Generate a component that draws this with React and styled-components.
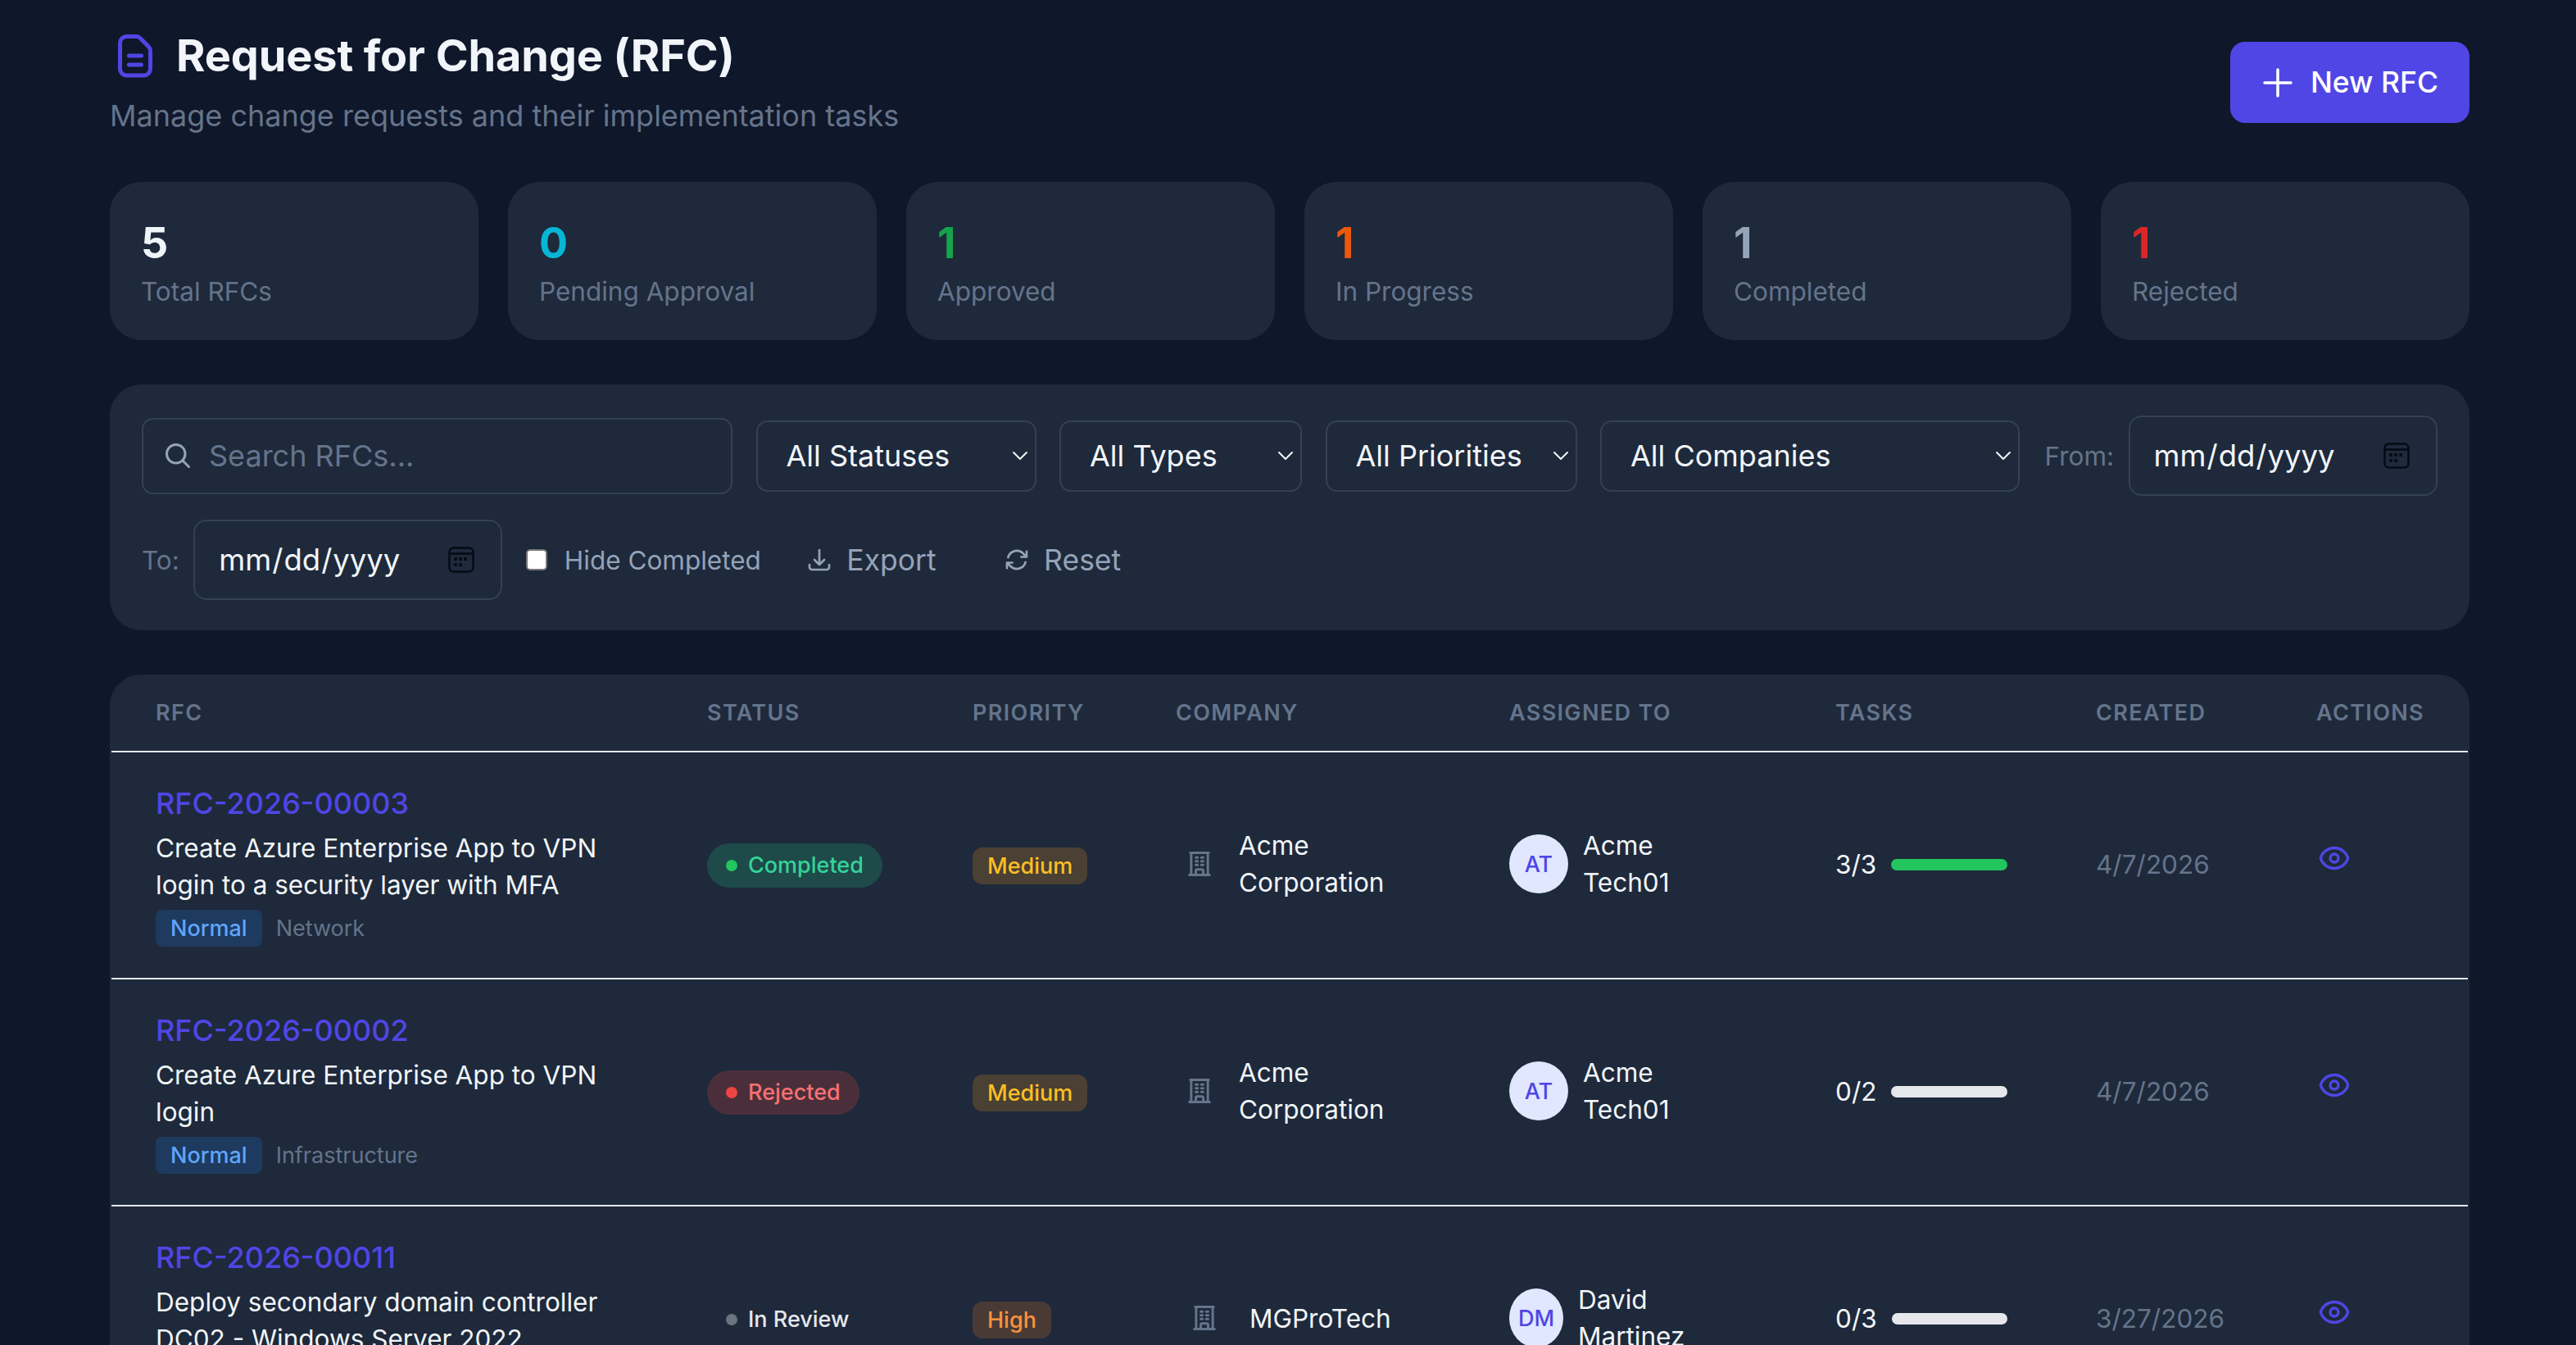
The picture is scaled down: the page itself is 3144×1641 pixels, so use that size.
import React from "react";
import styled, { createGlobalStyle } from "styled-components";
import {
  HiOutlineMagnifyingGlass,
  HiOutlineArrowDownTray,
  HiOutlineArrowPath,
  HiOutlineBuildingOffice,
  HiOutlineEye,
} from "react-icons/hi2";

const chevron = `url("data:image/svg+xml,%3Csvg xmlns='http://www.w3.org/2000/svg' width='20' height='12' fill='none' stroke='%23f1f5f9' stroke-width='2' stroke-linecap='round' stroke-linejoin='round'%3E%3Cpath d='M2 2l8 8 8-8'/%3E%3C/svg%3E")`;

const calendar = `url("data:image/svg+xml,%3Csvg xmlns='http://www.w3.org/2000/svg' width='32' height='32' fill='none' stroke='%23050a14' stroke-width='2.5'%3E%3Crect x='1.5' y='1.5' width='29' height='29' rx='5'/%3E%3Cpath d='M2 8.5h28'/%3E%3Cpath stroke-width='3.5' d='M9 13v4M15 13v4M21 13v4M9 20v4M15 20v4'/%3E%3C/svg%3E")`;

const GlobalStyle = createGlobalStyle`
  html, body {
    margin: 0;
    height: 100%;
    overflow: hidden;
    background: #0f172a;
  }
  body {
    font-family: Inter, "Liberation Sans", sans-serif;
    color: #f1f5f9;
  }
  * {
    box-sizing: border-box;
  }
`;

const Page = styled.div`
  height: 1641px;
  overflow: hidden;
  padding: 38px 130px 0 134px;
`;

const Header = styled.div`
  display: flex;
  justify-content: space-between;
  align-items: flex-start;
  margin-bottom: 56px;
`;

const TitleRow = styled.div`
  display: flex;
  align-items: center;
  gap: 29px;
  padding-left: 10px;
  height: 60px;
`;

const Title = styled.h1`
  margin: 0;
  font-size: 54px;
  font-weight: 700;
  letter-spacing: -0.1px;
  line-height: 60px;
`;

const Subtitle = styled.p`
  margin: 18px 0 0;
  font-size: 36px;
  line-height: 50px;
  color: #64748b;
`;

const NewButton = styled.button`
  display: flex;
  align-items: center;
  gap: 22px;
  height: 99px;
  width: 292px;
  margin-top: 13px;
  padding: 0 36px 0 40px;
  border: 0;
  border-radius: 18px;
  background: #4f46e5;
  color: #fff;
  font-family: inherit;
  font-size: 35.5px;
  font-weight: 500;
`;

const Stats = styled.div`
  display: grid;
  grid-template-columns: repeat(6, 1fr);
  gap: 36px;
  margin-bottom: 54px;
`;

const StatCard = styled.div`
  height: 193px;
  padding: 42px 38px 0;
  border-radius: 38px;
  background: #1e293b;
`;

const StatValue = styled.div`
  font-size: 52px;
  font-weight: 700;
  line-height: 66px;
  color: ${({ $color }) => $color};
`;

const StatLabel = styled.div`
  margin-top: 4px;
  font-size: 31.5px;
  line-height: 44px;
  color: #64748b;
`;

const FilterPanel = styled.div`
  display: flex;
  flex-wrap: wrap;
  align-items: center;
  align-content: flex-start;
  column-gap: 28.5px;
  row-gap: 29px;
  height: 300px;
  padding: 38px 20px 38px 39px;
  margin-bottom: 54px;
  border-radius: 38px;
  background: #1e293b;
`;

const SearchBox = styled.label`
  display: flex;
  align-items: center;
  gap: 20px;
  width: 721px;
  height: 93px;
  padding: 0 24px;
  border: 2px solid #334155;
  border-radius: 14px;
`;

const SearchInput = styled.input`
  flex: 1;
  min-width: 0;
  padding: 0;
  border: 0;
  outline: 0;
  background: transparent;
  color: #f1f5f9;
  font-family: inherit;
  font-size: 36px;

  &::placeholder {
    color: #64748b;
  }
`;

const Select = styled.select`
  appearance: none;
  width: ${({ $w }) => $w}px;
  height: 87px;
  padding: 0 40px 0 35px;
  border: 2px solid #334155;
  border-radius: 14px;
  background: #1e293b ${chevron} no-repeat right 8px center;
  color: #f1f5f9;
  font-family: inherit;
  font-size: 36px;
`;

const FieldLabel = styled.span`
  margin: 0 -11px 0 ${({ $left }) => $left || 0}px;
  font-size: 31.5px;
  color: #64748b;
`;

const DateInput = styled.input`
  width: 377px;
  height: 98px;
  padding: 0 32px 0 28px;
  border: 2px solid #334155;
  border-radius: 16px;
  background: transparent;
  color: #f1f5f9;
  font-family: inherit;
  font-size: 36.5px;

  &::-webkit-calendar-picker-indicator {
    width: 32px;
    height: 32px;
    padding: 0;
    margin: 0;
    background: ${calendar} no-repeat center;
  }
`;

const CheckLabel = styled.label`
  display: flex;
  align-items: center;
  gap: 21px;
  font-size: 31.5px;
  color: #94a3b8;
`;

const Checkbox = styled.input`
  appearance: none;
  width: 26px;
  height: 26px;
  margin: 0;
  border: 2px solid #767676;
  border-radius: 5px;
  background: #fff;
`;

const GhostButton = styled.button`
  display: flex;
  align-items: center;
  gap: 17px;
  height: 98px;
  padding: 0 27px;
  border: 0;
  background: transparent;
  color: #94a3b8;
  font-family: inherit;
  font-size: 35.5px;
`;

const TableWrap = styled.div`
  overflow: hidden;
  border: 2px solid #1e293b;
  border-radius: 38px;
  background: #1e293b;
`;

const Table = styled.table`
  width: 100%;
  table-layout: fixed;
  border-collapse: collapse;
`;

const HeadCell = styled.th`
  height: 92px;
  padding: 0 54px 3px;
  border-bottom: 2px solid #e5e7eb;
  text-align: left;
  font-size: 27px;
  font-weight: 600;
  letter-spacing: 1.35px;
  color: #64748b;
`;

const Row = styled.tr`
  border-bottom: 2px solid #e5e7eb;
`;

const Cell = styled.td`
  height: 277px;
  padding: 36px 54px;
  vertical-align: middle;
  font-size: 31.5px;
  line-height: 45px;
`;

const RfcId = styled.div`
  font-size: 36px;
  font-weight: 500;
  line-height: 50px;
  margin-bottom: 7px;
  color: #4f46e5;
`;

const TagRow = styled.div`
  display: flex;
  align-items: center;
  gap: 17px;
  margin: 8px 0 2px;
  font-size: 27px;
  line-height: 45px;
  color: #64748b;
`;

const TypeTag = styled.span`
  padding: 0 18px;
  border-radius: 8px;
  background: #1e3a5f;
  color: #60a5fa;
  font-weight: 500;
`;

const StatusBadge = styled.span`
  display: inline-flex;
  align-items: center;
  gap: 13px;
  height: 54px;
  padding: 0 23px;
  border-radius: 27px;
  background: ${({ $bg }) => $bg};
  color: ${({ $color }) => $color};
  font-size: 27px;
  font-weight: 500;
  line-height: 54px;
  vertical-align: middle;
`;

const Dot = styled.i`
  width: 14px;
  height: 14px;
  border-radius: 50%;
  background: ${({ $color }) => $color};
`;

const PriorityBadge = styled.span`
  display: inline-block;
  height: 45px;
  padding: 0 18px;
  border-radius: 12px;
  background: ${({ $bg }) => $bg};
  color: ${({ $color }) => $color};
  font-size: 27px;
  font-weight: 500;
  line-height: 45px;
  vertical-align: middle;
`;

const IconText = styled.div`
  display: flex;
  align-items: center;
  margin-bottom: 3px;
`;

const IconBox = styled.div`
  display: flex;
  justify-content: center;
  flex: none;
  width: ${({ $w }) => $w}px;
  margin-right: 20px;
  color: #64748b;
`;

const Avatar = styled.div`
  flex: none;
  display: flex;
  align-items: center;
  justify-content: center;
  width: ${({ $w }) => $w}px;
  height: 72px;
  margin-right: 18px;
  border-radius: 50%;
  background: #e0e7ff;
  color: #4f46e5;
  font-size: 27px;
  font-weight: 500;
`;

const TaskCell = styled.div`
  display: flex;
  align-items: center;
  gap: 18px;
  margin-bottom: 2px;
`;

const Track = styled.div`
  width: 144px;
  height: 14px;
  border-radius: 7px;
  background: #e5e7eb;
  overflow: hidden;
`;

const Fill = styled.div`
  height: 100%;
  background: #22c55e;
`;

const DateText = styled.div`
  margin-bottom: 2px;
  color: #64748b;
`;

const EyeButton = styled.div`
  display: flex;
  color: #4f46e5;
  margin: 0 0 17px 2px;
`;

const stats = [
  ["5", "Total RFCs", "#f1f5f9"],
  ["0", "Pending Approval", "#06b6d4"],
  ["1", "Approved", "#16a34a"],
  ["1", "In Progress", "#ea580c"],
  ["1", "Completed", "#94a3b8"],
  ["1", "Rejected", "#dc2626"],
];

const columns = [
  ["RFC", 673],
  ["STATUS", 324],
  ["PRIORITY", 248],
  ["COMPANY", 407],
  ["ASSIGNED TO", 398],
  ["TASKS", 318],
  ["CREATED", 269],
  ["ACTIONS", 239],
];

const statusColors = {
  Completed: { bg: "#1e4a4a", color: "#34d399", dot: "#22c55e" },
  Rejected: { bg: "#4a2f3b", color: "#f87171", dot: "#ef4444" },
  "In Review": { bg: "transparent", color: "#e5e7eb", dot: "#6b7280" },
};

const priorityColors = {
  Medium: { bg: "#4a4033", color: "#fbbf24" },
  High: { bg: "#4a3a36", color: "#fb923c" },
};

const rows = [
  {
    id: "RFC-2026-00003",
    title: "Create Azure Enterprise App to VPN login to a security layer with MFA",
    category: "Network",
    status: "Completed",
    priority: "Medium",
    company: "Acme Corporation",
    boxW: 57,
    initials: "AT",
    avatarW: 72,
    assignee: "Acme Tech01",
    done: 3,
    total: 3,
    created: "4/7/2026",
  },
  {
    id: "RFC-2026-00002",
    title: "Create Azure Enterprise App to VPN login",
    category: "Infrastructure",
    status: "Rejected",
    priority: "Medium",
    company: "Acme Corporation",
    boxW: 57,
    initials: "AT",
    avatarW: 72,
    assignee: "Acme Tech01",
    done: 0,
    total: 2,
    created: "4/7/2026",
  },
  {
    id: "RFC-2026-00011",
    title: "Deploy secondary domain controller DC02 - Windows Server 2022",
    category: "Infrastructure",
    status: "In Review",
    priority: "High",
    company: "MGProTech",
    boxW: 70,
    initials: "DM",
    avatarW: 66,
    assignee: "David Martinez",
    done: 0,
    total: 3,
    created: "3/27/2026",
  },
];

const DocIcon = () => (
  <svg width="42" height="53" viewBox="0 0 42 53" fill="none" stroke="#4f46e5" strokeWidth="5" strokeLinecap="round" strokeLinejoin="round">
    <path d="M10.5 2.5H23q2 0 4 2L37.5 15q2 2 2 5v22a8 8 0 0 1-8 8h-21a8 8 0 0 1-8-8V10.5a8 8 0 0 1 8-8z" />
    <path d="M13.5 26h15M13.5 37h15" />
  </svg>
);

const PlusIcon = () => (
  <svg width="36" height="36" viewBox="0 0 36 36" fill="none" stroke="#fff" strokeWidth="3.5" strokeLinecap="round">
    <path d="M18 2v32M2 18h32" />
  </svg>
);

const App = () => (
  <Page>
    <GlobalStyle />
    <Header>
      <div>
        <TitleRow>
          <DocIcon />
          <Title>Request for Change (RFC)</Title>
        </TitleRow>
        <Subtitle>Manage change requests and their implementation tasks</Subtitle>
      </div>
      <NewButton>
        <PlusIcon />
        New RFC
      </NewButton>
    </Header>

    <Stats>
      {stats.map(([value, label, color]) => (
        <StatCard key={label}>
          <StatValue $color={color}>{value}</StatValue>
          <StatLabel>{label}</StatLabel>
        </StatCard>
      ))}
    </Stats>

    <FilterPanel>
      <SearchBox>
        <HiOutlineMagnifyingGlass size={36} color="#94a3b8" strokeWidth={2} />
        <SearchInput placeholder="Search RFCs..." />
      </SearchBox>
      <Select $w={342}>
        <option>All Statuses</option>
      </Select>
      <Select $w={296}>
        <option>All Types</option>
      </Select>
      <Select $w={307}>
        <option>All Priorities</option>
      </Select>
      <Select $w={512}>
        <option>All Companies</option>
      </Select>
      <FieldLabel $left={2}>From:</FieldLabel>
      <DateInput type="date" />
      <FieldLabel>To:</FieldLabel>
      <DateInput type="date" />
      <CheckLabel>
        <Checkbox type="checkbox" />
        Hide Completed
      </CheckLabel>
      <GhostButton>
        <HiOutlineArrowDownTray size={32} strokeWidth={2} />
        Export
      </GhostButton>
      <GhostButton>
        <HiOutlineArrowPath size={32} strokeWidth={2} />
        Reset
      </GhostButton>
    </FilterPanel>

    <TableWrap>
      <Table>
        <colgroup>
          {columns.map(([name, width]) => (
            <col key={name} width={width} />
          ))}
        </colgroup>
        <thead>
          <tr>
            {columns.map(([name]) => (
              <HeadCell key={name}>{name}</HeadCell>
            ))}
          </tr>
        </thead>
        <tbody>
          {rows.map((row) => {
            const status = statusColors[row.status];
            const priority = priorityColors[row.priority];
            return (
              <Row key={row.id}>
                <Cell>
                  <RfcId>{row.id}</RfcId>
                  <div>{row.title}</div>
                  <TagRow>
                    <TypeTag>Normal</TypeTag>
                    {row.category}
                  </TagRow>
                </Cell>
                <Cell>
                  <StatusBadge $bg={status.bg} $color={status.color}>
                    <Dot $color={status.dot} />
                    {row.status}
                  </StatusBadge>
                </Cell>
                <Cell>
                  <PriorityBadge $bg={priority.bg} $color={priority.color}>
                    {row.priority}
                  </PriorityBadge>
                </Cell>
                <Cell>
                  <IconText>
                    <IconBox $w={row.boxW}>
                      <HiOutlineBuildingOffice size={36} strokeWidth={2} />
                    </IconBox>
                    <div>{row.company}</div>
                  </IconText>
                </Cell>
                <Cell>
                  <IconText>
                    <Avatar $w={row.avatarW}>{row.initials}</Avatar>
                    <div>{row.assignee}</div>
                  </IconText>
                </Cell>
                <Cell>
                  <TaskCell>
                    {row.done}/{row.total}
                    <Track>
                      <Fill style={{ width: `${(row.done / row.total) * 100}%` }} />
                    </Track>
                  </TaskCell>
                </Cell>
                <Cell>
                  <DateText>{row.created}</DateText>
                </Cell>
                <Cell>
                  <EyeButton>
                    <HiOutlineEye size={40} strokeWidth={2} />
                  </EyeButton>
                </Cell>
              </Row>
            );
          })}
        </tbody>
      </Table>
    </TableWrap>
  </Page>
);

export default App;
